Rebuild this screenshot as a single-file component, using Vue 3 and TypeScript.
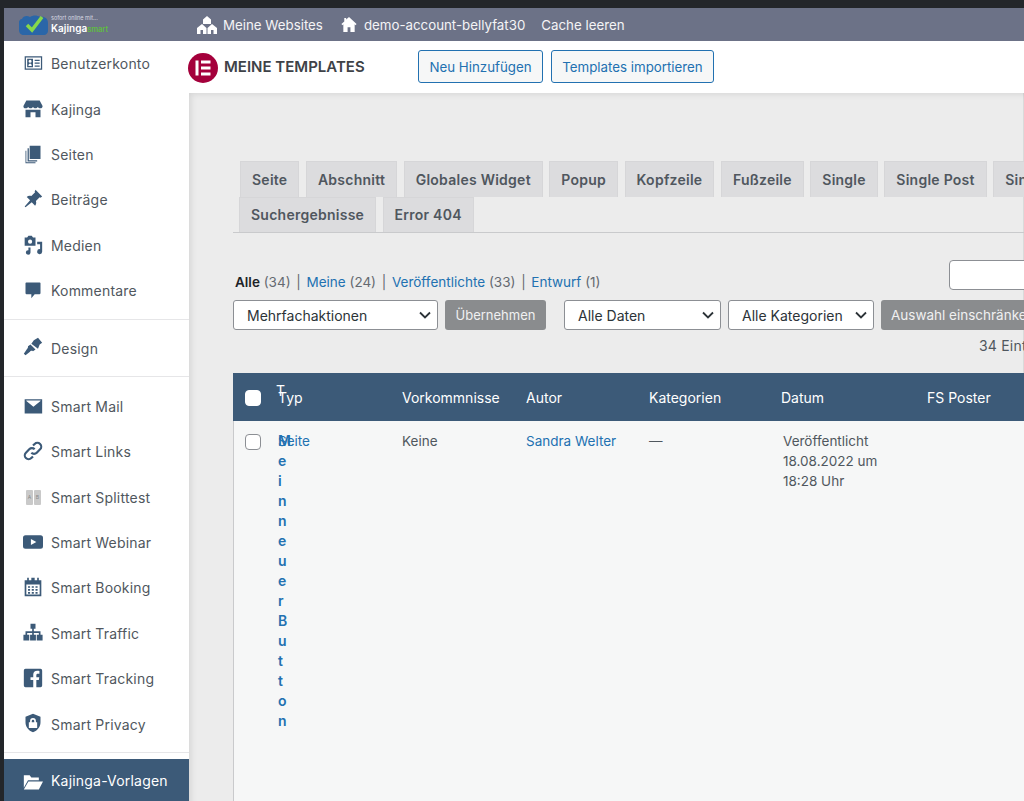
<script setup lang="ts">
interface MenuItem {
  label: string
  icon: string
  stroke?: boolean
  ab?: boolean
}

const groupOne: MenuItem[] = [
  { label: 'Benutzerkonto', icon: 'M2 4h21v16H2zM3.500 5.500v13h18v-13zM5 7h7v10H5zM14 8v1.500h6V8zM14 11.500V13h6v-1.500zM14 15v1.500h6V15zM8.500 8a1.800 1.800 0 1 0 0 3.600 1.800 1.800 0 0 0 0-3.600zM6.500 15.500h4c0-1.600-.8-2.800-2-2.800s-2 1.200-2 2.800z' },
  { label: 'Kajinga', icon: 'M4 3h16l3.500 6.500c0 1.500-1 2.800-2.800 2.800-1.300 0-2.200-.6-2.900-1.500-.7.9-1.700 1.500-2.900 1.500s-2.200-.6-2.900-1.500c-.7.9-1.700 1.500-2.900 1.500s-2.200-.6-2.900-1.500c-.7.9-1.600 1.500-2.900 1.500C1 12.300.5 11 .5 9.500zM3 14h18v9h-6v-6H9v6H3z' },
  { label: 'Seiten', icon: 'M8 2h13v16H8zM5.500 5H7v14.500h10V21H5.500zM4 8v14h11v1H3V8z' },
  { label: 'Beiträge', icon: 'M15 1l8 8-2 1.500-1-.5-4.500 4.500c.8 2.500.3 4-1 5.500l-4-4L3 22l-1-1 6.500-7.500-4-4c1.500-1.300 3-1.800 5.500-1L14.500 4l-.5-1z' },
  { label: 'Medien', icon: 'M2 3h3l1.500-2h4L12 3h3v10H2zM8.500 5.500a2.500 2.500 0 1 0 0 5 2.500 2.500 0 0 0 0-5zM23 8v12a3 3 0 1 1-2.500-3v-6H17V8zM9 15v6a2.800 2.800 0 1 1-2.500-2.800V15z' },
  { label: 'Kommentare', icon: 'M4 3h16a1 1 0 0 1 1 1v12a1 1 0 0 1-1 1h-6l-4 5v-5H4a1 1 0 0 1-1-1V4a1 1 0 0 1 1-1z' },
]
const designItem: MenuItem = {
  label: 'Design',
  icon: 'M13 4l5-3 5 6-3 2-2 5-8-6zM9 9l6 6-3 2c-2-1-3 0-4 1l-5 4-2-2 4-6c1-1 1-2 1-3z',
}
const smartItems: MenuItem[] = [
  { label: 'Smart Mail', icon: 'M2 4h21v17H2zM4 6l8.500 7L21 6v-.5H4z' },
  { label: 'Smart Links', stroke: true, icon: 'M10 14a4.500 4.500 0 0 0 6.500 0l4-4a4.500 4.500 0 0 0-6.500-6.500l-2 2M14 10a4.500 4.500 0 0 0-6.500 0l-4 4a4.500 4.500 0 0 0 6.500 6.500l2-2' },
  { label: 'Smart Splittest', icon: '', ab: true },
  { label: 'Smart Webinar', icon: 'M3 4h18a3 3 0 0 1 3 3v10a3 3 0 0 1-3 3H3a3 3 0 0 1-3-3V7a3 3 0 0 1 3-3zM9.500 8.500v7l6.500-3.500z' },
  { label: 'Smart Booking', icon: 'M5 1h2v3h3V1h4v3h3V1h2v3h3v19H2V4h3zM4 9v12h16V9zM6 11h2.500v2H6zM10.500 11h2.500v2h-2.500zM15 11h2.500v2H15zM6 14.500h2.500v2H6zM10.500 14.500h2.500v2h-2.500zM15 14.500h2.500v2H15zM6 18h2.500v2H6zM10.500 18h2.500v2h-2.500zM15 18h2.500v2H15z' },
  { label: 'Smart Traffic', icon: 'M9 1h6v6h-2v3h8v4h2.500v7h-7v-7H19v-2h-6v2h2.500v7h-7v-7H11v-2H5v2h2.500v7h-7v-7H3v-4h8V7H9z' },
  { label: 'Smart Tracking', icon: 'M3 1h18a2 2 0 0 1 2 2v18a2 2 0 0 1-2 2h-5v-8.500h3l.5-3.500H16V8.500c0-1 .5-1.700 1.800-1.700h1.900V3.600C19 3.500 18 3.400 17 3.400c-3 0-4.700 1.700-4.700 4.700V11H9v3.500h3.300V23H3a2 2 0 0 1-2-2V3a2 2 0 0 1 2-2z' },
  { label: 'Smart Privacy', icon: 'M12 1l9 3.500V11c0 5.500-3.500 10-9 12-5.500-2-9-6.500-9-12V4.500zM12 6a3.500 3.500 0 0 0-3.500 3.500V11H7v7h10v-7h-1.500V9.500A3.500 3.500 0 0 0 12 6zM12 8a1.500 1.500 0 0 1 1.500 1.500V11h-3V9.500A1.500 1.500 0 0 1 12 8z' },
]

const firstRowTabs = ['Seite', 'Abschnitt', 'Globales Widget', 'Popup', 'Kopfzeile', 'Fußzeile', 'Single', 'Single Post', 'Single Page']
const secondRowTabs = ['Suchergebnisse', 'Error 404']
const titleLetters = 'Meinneuer Button'

const columns = ['Typ', 'Vorkommnisse', 'Autor', 'Kategorien', 'Datum', 'FS Poster']
</script>

<template>
  <div class="screen">
    <header class="topbar">
      <div class="logo">
        <svg class="logo-mark" viewBox="0 0 30 20" width="30" height="20">
          <path d="M3 4c1-3 5-4 8-2 3-2 7-2 10 0 4-1 8 1 8 6v8c0 2-2 4-4 4H5c-3 0-5-2-5-5V7c0-1 1-3 3-3z" fill="#2a66a8" />
          <path d="M8 10l5 5L23 2" fill="none" stroke="#86d84a" stroke-width="3.500" />
        </svg>
        <div class="logo-text">
          <span class="logo-small">sofort online mit...</span>
          <span class="logo-name">Kajinga<em>smart</em></span>
        </div>
      </div>
      <nav class="topnav">
        <a class="topnav-item websites">
          <svg viewBox="0 0 20 18" width="20" height="18" fill="#fff">
            <path d="M10 0l4 3.500V8H6V3.500zM5 8l4.500 4v6H0v-6zM15 8l5 4v6h-9.500v-6zM3.500 14v4h2.500v-4zM14 14v4h2.500v-4z" fill-rule="evenodd" />
          </svg>
          Meine Websites
        </a>
        <a class="topnav-item site">
          <svg viewBox="0 0 16 18" width="16" height="17" fill="#fff">
            <path d="M8 1l8 7.500-1 1.200-1-1V17H9.500v-5h-3v5H2V8.700l-1 1L0 8.500l3-2.800V2h2v1.800z" />
          </svg>
          demo-account-bellyfat30
        </a>
        <a class="topnav-item cache">Cache leeren</a>
      </nav>
    </header>

    <div class="body">
      <aside class="sidebar">
        <div class="menu-group first">
          <a v-for="item in groupOne" :key="item.label" class="menu-item">
            <svg class="menu-icon" viewBox="0 0 24 24" width="20" height="20">
              <path :d="item.icon" fill="#3c5a78" fill-rule="evenodd" />
            </svg>
            {{ item.label }}
          </a>
        </div>
        <div class="menu-group">
          <a class="menu-item">
            <svg class="menu-icon" viewBox="0 0 24 24" width="20" height="20">
              <path :d="designItem.icon" fill="#3c5a78" fill-rule="evenodd" />
            </svg>
            {{ designItem.label }}
          </a>
        </div>
        <div class="menu-group">
          <a v-for="item in smartItems" :key="item.label" class="menu-item">
            <span v-if="item.ab" class="ab-icon"><i>A</i><i>B</i></span>
            <svg v-else class="menu-icon" viewBox="0 0 24 24" width="20" height="20">
              <path
                :d="item.icon"
                :fill="item.stroke ? 'none' : '#3c5a78'"
                :stroke="item.stroke ? '#3c5a78' : 'none'"
                :stroke-width="item.stroke ? 2.6 : 0"
                fill-rule="evenodd"
              />
            </svg>
            {{ item.label }}
          </a>
        </div>
        <a class="menu-item active">
          <svg class="menu-icon" viewBox="0 0 24 24" width="20" height="20">
            <path d="M1 4h7l2 2.500h9V10H6L1 19zM6.500 11.500H24L19 21H1z" fill="#fff" />
          </svg>
          Kajinga-Vorlagen
        </a>
      </aside>

      <main class="main">
        <div class="page-head">
          <svg class="elementor" viewBox="0 0 30 30" width="30" height="30">
            <circle cx="15" cy="15" r="15" fill="#a4003b" />
            <path d="M7.500 7.500h3v15h-3zM13 7.500h9.500v3H13zM13 13.500h9.500v3H13zM13 19.500h9.500v3H13z" fill="#fff" />
          </svg>
          <h1>MEINE TEMPLATES</h1>
          <div class="head-buttons">
            <button class="outline new">Neu Hinzufügen</button>
            <button class="outline">Templates importieren</button>
          </div>
        </div>

        <div class="content">
          <div class="inner">
            <div class="tabs">
              <div class="tab-row">
                <a v-for="tab in firstRowTabs" :key="tab" class="tab">{{ tab }}</a>
              </div>
              <div class="tab-row second">
                <a v-for="tab in secondRowTabs" :key="tab" class="tab">{{ tab }}</a>
              </div>
            </div>

            <div class="status-row">
              <ul class="status">
                <li><b>Alle</b> (34)</li>
                <li class="sep">|</li>
                <li><a>Meine</a> (24)</li>
                <li class="sep">|</li>
                <li><a>Veröffentlichte</a> (33)</li>
                <li class="sep">|</li>
                <li><a>Entwurf</a> (1)</li>
              </ul>
              <div class="search"></div>
            </div>

            <div class="filters">
              <div class="select bulk">
                Mehrfachaktionen
                <svg viewBox="0 0 12 8" width="12" height="8"><path d="M1 1.500l5 5 5-5" fill="none" stroke="#2c3338" stroke-width="1.800" /></svg>
              </div>
              <button class="grey apply">Übernehmen</button>
              <div class="select dates">
                Alle Daten
                <svg viewBox="0 0 12 8" width="12" height="8"><path d="M1 1.500l5 5 5-5" fill="none" stroke="#2c3338" stroke-width="1.800" /></svg>
              </div>
              <div class="select cats">
                Alle Kategorien
                <svg viewBox="0 0 12 8" width="12" height="8"><path d="M1 1.500l5 5 5-5" fill="none" stroke="#2c3338" stroke-width="1.800" /></svg>
              </div>
              <button class="grey narrow">Auswahl einschränken</button>
            </div>

            <div class="count">34 Einträge</div>

            <div class="table">
              <div class="grid thead">
                <div class="cb-cell"><span class="check head"></span></div>
                <div class="title-cell head-title">T</div>
                <div v-for="col in columns" :key="col" class="th">{{ col }}</div>
              </div>
              <div class="grid tbody">
                <div class="cb-cell"><span class="check"></span></div>
                <a class="title-cell row-title">{{ titleLetters }}</a>
                <div class="td type"><a>Seite</a></div>
                <div class="td">Keine</div>
                <div class="td"><a>Sandra Welter</a></div>
                <div class="td">—</div>
                <div class="td date">Veröffentlicht<br />18.08.2022 um<br />18:28 Uhr</div>
                <div class="td"></div>
              </div>
            </div>
          </div>
        </div>
      </main>
    </div>
  </div>
</template>

<style scoped>
.screen {
  width: 1024px;
  height: 801px;
  box-sizing: border-box;
  padding: 8px 0 0 4px;
  background: #23262a;
  overflow: hidden;
  display: flex;
  flex-direction: column;
  font-family: Inter, "Liberation Sans", sans-serif;
  font-size: 13.5px;
  color: #50575e;
}

.topbar {
  height: 33px;
  flex: none;
  background: #6c7287;
  display: flex;
  align-items: center;
  color: #fff;
}

.logo {
  width: 189px;
  box-sizing: border-box;
  padding-left: 15px;
  display: flex;
  align-items: center;
  gap: 2px;
}

.logo-text {
  display: flex;
  flex-direction: column;
  line-height: 1;
}

.logo-small {
  font-size: 5.5px;
  color: #d8dae2;
  margin-bottom: 2px;
}

.logo-name {
  font-size: 10px;
  font-weight: 600;
}

.logo-name em {
  font-style: normal;
  font-size: 7.5px;
  color: #5fbf3e;
}

.topnav {
  display: flex;
  align-items: center;
  margin-left: 4px;
  font-size: 13.3px;
}

.topnav-item {
  display: flex;
  align-items: center;
  gap: 6px;
  margin-right: 19px;
  color: #f4f4f6;
  white-space: nowrap;
}

.topnav-item.websites {
  margin-right: 18px;
}

.topnav-item.site {
  gap: 7px;
}

.topnav-item.cache {
  margin-left: -3px;
}

.body {
  flex: 1;
  min-height: 0;
  display: flex;
}

.sidebar {
  width: 185px;
  flex: none;
  background: #fff;
  display: flex;
  flex-direction: column;
}

.menu-group {
  padding-bottom: 5.5px;
  margin-bottom: 6.5px;
  border-bottom: 1px solid #e6e6e8;
}

.menu-group.first {
  margin-bottom: 5.5px;
}

.menu-item {
  height: 45.4px;
  box-sizing: border-box;
  padding-left: 47px;
  position: relative;
  display: flex;
  align-items: center;
  font-size: 14px;
  letter-spacing: 0.2px;
  color: #50575e;
  white-space: nowrap;
}

.menu-icon {
  position: absolute;
  left: 19px;
  top: 12px;
}

.ab-icon {
  position: absolute;
  left: 22px;
  top: 15px;
  display: flex;
  gap: 1px;
}

.ab-icon i {
  width: 7px;
  height: 15px;
  background: #c9c9c9;
  color: #8a8a8a;
  font-size: 5px;
  font-style: normal;
  line-height: 15px;
  text-align: center;
  border-radius: 1px;
}

.menu-item.active {
  background: #3c5a78;
  color: #fff;
  height: 43px;
  margin-top: -1px;
  padding-top: 2px;
}

.menu-item.active .menu-icon {
  top: 13px;
}

.main {
  flex: 1;
  min-width: 0;
  display: flex;
  flex-direction: column;
}

.page-head {
  height: 52px;
  flex: none;
  background: #fff;
  display: flex;
  align-items: center;
}

.elementor {
  margin-left: -1px;
  margin-top: 1px;
}

h1 {
  margin: 0 0 2px 6px;
  width: 194px;
  font-size: 15px;
  font-weight: 600;
  color: #3e4247;
  white-space: nowrap;
}

.head-buttons {
  display: flex;
  gap: 8px;
  margin-top: -1px;
}

button {
  font: inherit;
  box-sizing: border-box;
  white-space: nowrap;
}

.outline {
  height: 33px;
  padding: 0;
  width: 163px;
  font-size: 13.3px;
  border: 1px solid #2271b1;
  border-radius: 3px;
  background: #f6f7f7;
  color: #2271b1;
}

.outline.new {
  width: 125px;
}

.content {
  flex: 1;
  min-height: 0;
  background: #ececec;
  box-shadow: inset 6px 5px 6px -4px rgba(0, 0, 0, 0.1), inset -1px 0 #dadada;
  overflow: hidden;
  padding: 68px 0 0 44px;
}

.inner {
  width: 900px;
  height: 100%;
  display: flex;
  flex-direction: column;
}

.tabs {
  border-bottom: 1px solid #c9cacc;
  padding-left: 7px;
}

.tab-row {
  display: flex;
  height: 36px;
  gap: 6.5px;
}

.tab-row.second {
  height: 35px;
  margin-left: -1px;
}

.tab {
  box-sizing: border-box;
  padding: 0 11px;
  background: #dcdcde;
  border: 1px solid #d6d6d8;
  border-bottom: none;
  font-weight: 600;
  font-size: 14px;
  letter-spacing: 0.25px;
  line-height: 35px;
  color: #50575e;
  white-space: nowrap;
}

.tab-row.second .tab {
  line-height: 33px;
}

.status-row {
  margin-top: 27px;
  height: 30px;
  display: flex;
  justify-content: space-between;
  align-items: flex-end;
}

.status {
  list-style: none;
  margin: 0 0 0 2px;
  padding: 0;
  display: flex;
  gap: 5.7px;
  font-size: 13.5px;
  line-height: 16px;
  color: #646970;
}

.status b {
  color: #1d2327;
  font-weight: 600;
}

a {
  color: #2271b1;
}

.search {
  width: 184px;
  height: 30px;
  box-sizing: border-box;
  background: #fff;
  border: 1px solid #8c8f94;
  border-radius: 4px;
}

.filters {
  margin-top: 10px;
  display: flex;
  gap: 7px;
}

.select {
  height: 30px;
  box-sizing: border-box;
  background: #fff;
  border: 1px solid #8c8f94;
  border-radius: 3px;
  padding: 0 6px 0 13px;
  display: flex;
  align-items: center;
  justify-content: space-between;
  font-size: 14px;
  color: #2c3338;
}

.select.bulk {
  width: 205px;
}

.select.dates {
  width: 157px;
  margin-left: 11px;
}

.select.cats {
  width: 146px;
}

.grey {
  height: 30px;
  border: none;
  border-radius: 3px;
  background: #8a8c8e;
  color: #f0f0f1;
  padding: 0;
  font-size: 13px;
}

.apply {
  width: 101px;
}

.narrow {
  width: 168px;
  padding-left: 10px;
  text-align: left;
  font-size: 13.5px;
}

.count {
  margin: 8px 0 19px 746px;
  line-height: 16px;
  font-size: 14px;
  letter-spacing: 0.2px;
  white-space: nowrap;
}

.table {
  flex: 1;
  display: flex;
  flex-direction: column;
}

.grid {
  display: grid;
  grid-template-columns: 43px 0 126px 124px 123px 132px 146px 1fr;
}

.thead {
  height: 48px;
  flex: none;
  background: #3c5a78;
  align-items: center;
  color: #fff;
  font-size: 14px;
}

.tbody {
  flex: 1;
  background: #f6f7f7;
  box-shadow: inset 1px 0 #c9cacc;
  padding-top: 10px;
  line-height: 20px;
  font-size: 13.5px;
  align-items: start;
}

.cb-cell {
  padding-left: 12px;
  display: flex;
}

.tbody .cb-cell {
  padding-top: 3px;
}

.check {
  width: 16px;
  height: 16px;
  box-sizing: border-box;
  border: 1px solid #8c8f94;
  border-radius: 4px;
  background: #fff;
}

.check.head {
  border-color: #fff;
  margin-top: 2px;
}

.title-cell {
  white-space: normal;
  min-width: 0;
}

.head-title {
  margin-bottom: 14px;
}

.row-title {
  display: block;
  width: 1px;
  margin-left: 2px;
  word-break: break-all;
  font-weight: 600;
  font-size: 14px;
}

.th {
  white-space: nowrap;
}

.th:nth-child(3) {
  padding-left: 2px;
}

.td {
  white-space: nowrap;
}

.td.type {
  padding-left: 2px;
}

.td.date {
  padding-left: 2px;
}
</style>

<style>
html,
body {
  margin: 0;
  background: #23262a;
}
</style>
